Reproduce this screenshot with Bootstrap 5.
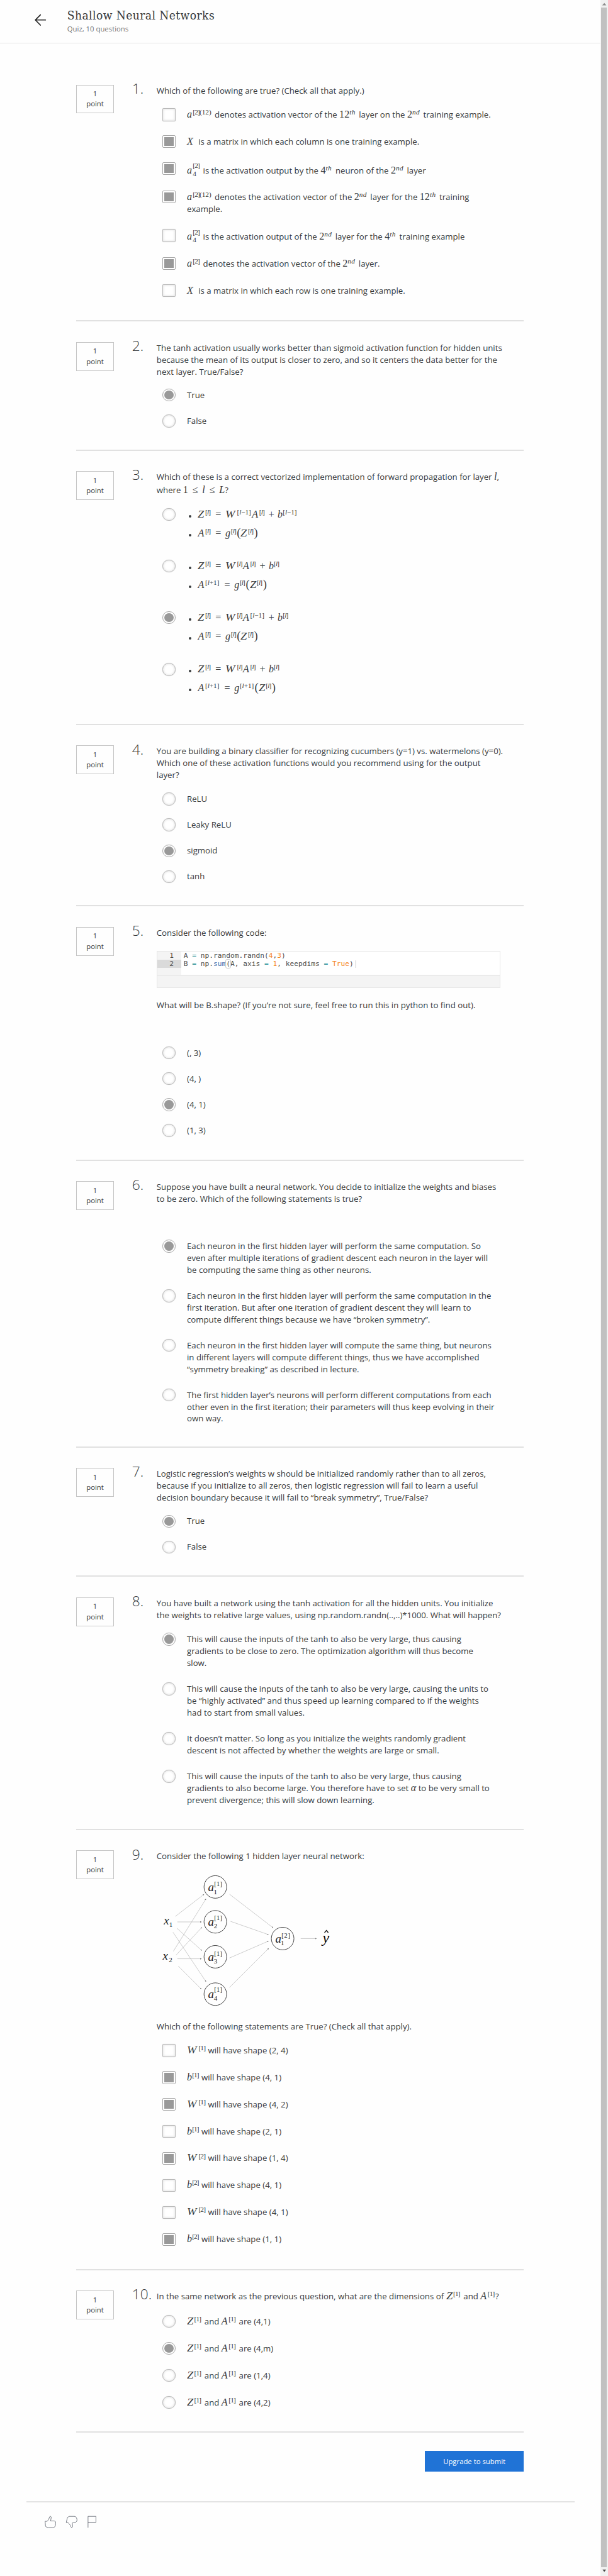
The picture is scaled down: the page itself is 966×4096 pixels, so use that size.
<!DOCTYPE html>
<html lang="en">
<head>
<meta charset="utf-8">
<title>Shallow Neural Networks</title>
<meta name="viewport" content="width=device-width, initial-scale=1">
<link rel="stylesheet" href="https://cdn.jsdelivr.net/npm/bootstrap@5.3.0/dist/css/bootstrap.min.css">
<style>
html{font-size:9.4536px}
body{font-family:"Open Sans",sans-serif;font-size:1.4rem;line-height:2rem;color:#373a3c;background:#fefefe;height:4096px;overflow:hidden}
main{width:100.9rem}
.topbar{height:7.25rem;border-bottom:1px solid #e3e3e3;padding-left:5.75rem}
.back{width:2.1rem;height:2.1rem;margin-top:2.35rem;flex:none}
.topbar h1{font-family:"DejaVu Serif Condensed","DejaVu Serif",serif;font-stretch:condensed;font-size:2.02rem;letter-spacing:.045rem;line-height:2.6rem;margin:1.37rem 0 0;white-space:nowrap}
.titles{margin-left:3.45rem}
.subt{font-size:1.2rem;line-height:1.6rem;color:#757575;margin-top:.08rem}
.question{margin-left:12.8rem;width:75.2rem;border-bottom:2px solid #e1e1e1;padding-top:3.42rem;align-items:flex-start}
.points{width:6.35rem;height:4.85rem;border:1px solid #c4c4c4;font-size:1.2rem;line-height:1.7rem;padding-top:.6rem;flex:none;text-align:center}
.num{width:7.17rem;padding-left:3.05rem;font-size:2.4rem;font-weight:300;line-height:3rem;margin-top:-.82rem;flex:none;white-space:nowrap}
.qbody{width:59rem;margin-top:0;flex:none}
.prompt p{margin:0}
.prompt .after-code{margin-top:1.85rem}
.prompt .after-net{margin-top:1.8rem}
.opt{padding:0 0 2.35rem 5.1rem;min-height:0;margin:0;position:relative;width:58.3rem;white-space:nowrap}
.opt .form-check-input{position:absolute;left:1.02rem;top:-.06rem;margin:0;float:none;width:2.15rem;height:2.15rem;border:1px solid #b9b9b9;background:#fff;box-shadow:inset 0 0 .35rem .1rem #e6e6e6,0 0 1px #ccc;background-image:none!important;opacity:1}
.opt .form-check-input[type=checkbox]{border-radius:.2rem}
.opt .form-check-input:checked{border-color:#a5a5a5;background-color:#999;box-shadow:none;padding:2px;background-clip:content-box}
.opt.mo{padding-bottom:2.54rem}
#q1{height:46.85rem;padding-top:6.98rem}#q1 .prompt{height:4.06rem}
#q2{height:21.72rem}#q2 .prompt{height:7.93rem}
#q3{height:46.16rem}#q3 .prompt{height:6.3rem}
#q4{height:30.5rem}#q4 .prompt{height:7.98rem}
#q5{height:42.77rem}#q5 .prompt{height:20.18rem}
#q6{height:48.22rem}#q6 .prompt{height:9.92rem}
#q7{height:21.77rem}#q7 .prompt{height:7.96rem}
#q8{height:42.58rem}#q8 .prompt{height:6.06rem}
#q9{height:74rem}#q9 .prompt{height:32.64rem}
#q10{height:27.33rem}#q10 .prompt{height:4.2rem}
#q1 .o1,#q1 .o2,#q1 .o6{padding-bottom:2.53rem}
#q1 .o3{padding-bottom:2.78rem}#q1 .o4{padding-bottom:2.49rem}#q1 .o5{padding-bottom:2.72rem}
.low1{position:relative;top:.08rem}.low2{position:relative;top:.36rem}.low3{position:relative;top:.25rem}
/* formulas */
.tx{font-family:"Liberation Serif",serif;font-size:1.7rem;line-height:1;display:inline-block;white-space:nowrap;vertical-align:baseline}
.tx i{display:inline-block}
.tx sup,.tx sub{font-size:1.2rem;line-height:0;top:auto;bottom:auto;position:static;vertical-align:.52rem}
.tx sup{letter-spacing:-.09rem;margin-right:.15rem}
.tx sup.wide{letter-spacing:-.01rem}
.tx sup .nb{letter-spacing:0}
.tx sup.ord{letter-spacing:.04rem}
.tx sup.hi{vertical-align:.92rem}
.tx sub{vertical-align:-.4rem;display:inline-block;width:0;line-height:0}
.tx .Z{width:1.22rem;transform:scaleX(1.15);transform-origin:0 0}.tx .W{width:1.95rem;transform:scaleX(1.15);transform-origin:0 0}.tx .A{width:1.22rem}.tx .b{width:.86rem}.tx .g{width:.92rem}.tx .a{width:.98rem}
.tx .r{display:inline-block;text-align:center;width:2.38rem}
.tx .pl{display:inline-block;text-align:center;width:2.1rem}
.tx .pr{font-size:1.95rem;line-height:0}
.w43{width:4.3rem}.w29{width:2.93rem}.w23{width:2.34rem}.w21{width:2.12rem}.wX{width:1.56rem}.wW{width:3.18rem}.wb{width:2.07rem}.wZ{width:2.58rem}
#q3 .opt{height:8.68rem;padding-bottom:0}
.formulas{list-style:none;margin:0;padding:.05rem 0 0}
.formulas li{height:3.17rem;padding-left:1.85rem;position:relative}
.formulas li::before{content:"";position:absolute;left:.28rem;top:1.02rem;width:.48rem;height:.48rem;border-radius:50%;background:#373a3c}
.editor{margin-top:2rem;width:57.8rem;height:6.3rem;border:.2rem solid #e6e6e6;background:#f4f4f4;font-family:"DejaVu Sans Mono",monospace;font-size:1.186rem;line-height:1.4rem;color:#4d4d4c}
.lines{background:linear-gradient(90deg,#f4f4f4 4.05rem,#fff 4.05rem);height:4.05rem;border-bottom:1px solid #dedede}
.lines>div{height:1.4rem;white-space:pre}
.ln{display:inline-block;width:4.05rem;padding-right:1.28rem;text-align:right;margin-right:.4rem}
.cur .ln{background:#dadada}
.k{color:#3e999f}.n{color:#f5871f}.f{color:#4271ae}
.par{outline:1px solid #ccc;border-radius:2px}
.caret{display:inline-block;width:2px;height:1.2rem;background:#e8e8e8;vertical-align:middle;margin-left:2px}
.net{display:block;width:31.73rem;height:24rem;margin-top:.8rem;font-family:"Liberation Serif",serif;font-style:italic;fill:#222}
.net .up{font-style:normal}
.submit{width:16.65rem;height:3.5rem;border-radius:0;background:#2073d6;color:#fff;font-size:1.2rem;line-height:3.5rem;padding:0;margin:3.05rem 0 0 58.6rem;border:0;display:block}
.actions{margin-left:12.8rem}
.foot{margin:4.95rem 0 0 4.45rem;width:92.1rem;border-top:2px solid #e4e4e4}
.react{display:block;width:9.17rem;height:2.33rem;margin:2.15rem 0 0 2.9rem}
.bar{width:1.3rem;height:4096px;background:#f1f1f1;top:0;right:0}
.bar svg{display:block;width:1.2rem;height:1.2rem}
.thumb{background:#c1c1c1;width:1rem;margin:.1rem 0 0 .1rem;height:4070px}
</style>
<script src="https://cdn.jsdelivr.net/npm/bootstrap@5.3.0/dist/js/bootstrap.bundle.min.js"></script>
</head>
<body class="position-relative">
<main>
<header class="topbar d-flex">
<svg class="back" viewBox="80 72 64 64" fill="none" stroke="#222" stroke-width="5.5" stroke-linecap="round" stroke-linejoin="round"><path d="M113 77L87 103.500L113 130M88 103.500H139"/></svg>
<div class="titles"><h1>Shallow Neural Networks</h1><div class="subt">Quiz, 10 questions</div></div>
</header>

<section class="question d-flex" id="q1"><div class="points">1<br>point</div><div class="num">1.</div><div class="qbody">
<div class="prompt"><p>Which of the following are true? (Check all that apply.)</p></div>
<div class="form-check opt o1"><input class="form-check-input" type="checkbox"><span class="tx w43"><i class="a">a</i><sup>[2]<span class="nb">(12)</span></sup></span> denotes activation vector of the <span class="tx w29">12<sup class="ord"><i>th</i></sup></span> layer on the <span class="tx w23">2<sup class="ord"><i>nd</i></sup></span> training example.</div>
<div class="form-check opt o2"><input class="form-check-input" type="checkbox" checked><span class="low1"><span class="tx wX"><i>X</i></span> is a matrix in which each column is one training example.</span></div>
<div class="form-check opt o3"><input class="form-check-input" type="checkbox" checked><span class="low2"><span class="tx w23"><i class="a">a</i><sub>4</sub><sup class="hi">[2]</sup></span> is the activation output by the <span class="tx w21">4<sup class="ord"><i>th</i></sup></span> neuron of the <span class="tx w23">2<sup class="ord"><i>nd</i></sup></span> layer</span></div>
<div class="form-check opt o4"><input class="form-check-input" type="checkbox" checked><span class="tx w43"><i class="a">a</i><sup>[2]<span class="nb">(12)</span></sup></span> denotes the activation vector of the <span class="tx w23">2<sup class="ord"><i>nd</i></sup></span> layer for the <span class="tx w29">12<sup class="ord"><i>th</i></sup></span> training<br>example.</div>
<div class="form-check opt o5"><input class="form-check-input" type="checkbox"><span class="low3"><span class="tx w23"><i class="a">a</i><sub>4</sub><sup class="hi">[2]</sup></span> is the activation output of the <span class="tx w23">2<sup class="ord"><i>nd</i></sup></span> layer for the <span class="tx w21">4<sup class="ord"><i>th</i></sup></span> training example</span></div>
<div class="form-check opt o6"><input class="form-check-input" type="checkbox" checked><span class="tx w23"><i class="a">a</i><sup>[2]</sup></span> denotes the activation vector of the <span class="tx w23">2<sup class="ord"><i>nd</i></sup></span> layer.</div>
<div class="form-check opt"><input class="form-check-input" type="checkbox"><span class="low1"><span class="tx wX"><i>X</i></span> is a matrix in which each row is one training example.</span></div>
</div></section>

<section class="question d-flex" id="q2"><div class="points">1<br>point</div><div class="num">2.</div><div class="qbody">
<div class="prompt"><p>The tanh activation usually works better than sigmoid activation function for hidden units<br>because the mean of its output is closer to zero, and so it centers the data better for the<br>next layer. True/False?</p></div>
<div class="form-check opt"><input class="form-check-input" type="radio" name="q2" checked>True</div>
<div class="form-check opt"><input class="form-check-input" type="radio" name="q2">False</div>
</div></section>

<section class="question d-flex" id="q3"><div class="points">1<br>point</div><div class="num">3.</div><div class="qbody">
<div class="prompt"><p>Which of these is a correct vectorized implementation of forward propagation for layer <span class="tx"><i>l</i></span>,<br><span class="low3">where <span class="tx">1<span class="r">≤</span><i>l</i><span class="r">≤</span><i>L</i></span>?</span></p></div>
<div class="form-check opt"><input class="form-check-input" type="radio" name="q3"><ul class="formulas">
<li><span class="tx"><i class="Z">Z</i><sup>[<i>l</i>]</sup><span class="r">=</span><i class="W">W</i><sup class="wide">[<i>l</i>−1]</sup><i class="A">A</i><sup>[<i>l</i>]</sup><span class="pl">+</span><i class="b">b</i><sup class="wide">[<i>l</i>−1]</sup></span></li>
<li><span class="tx"><i class="A">A</i><sup>[<i>l</i>]</sup><span class="r">=</span><i class="g">g</i><sup>[<i>l</i>]</sup><span class="pr">(</span><i class="Z">Z</i><sup>[<i>l</i>]</sup><span class="pr">)</span></span></li></ul></div>
<div class="form-check opt"><input class="form-check-input" type="radio" name="q3"><ul class="formulas">
<li><span class="tx"><i class="Z">Z</i><sup>[<i>l</i>]</sup><span class="r">=</span><i class="W">W</i><sup>[<i>l</i>]</sup><i class="A">A</i><sup>[<i>l</i>]</sup><span class="pl">+</span><i class="b">b</i><sup>[<i>l</i>]</sup></span></li>
<li><span class="tx"><i class="A">A</i><sup class="wide">[<i>l</i>+1]</sup><span class="r">=</span><i class="g">g</i><sup>[<i>l</i>]</sup><span class="pr">(</span><i class="Z">Z</i><sup>[<i>l</i>]</sup><span class="pr">)</span></span></li></ul></div>
<div class="form-check opt"><input class="form-check-input" type="radio" name="q3" checked><ul class="formulas">
<li><span class="tx"><i class="Z">Z</i><sup>[<i>l</i>]</sup><span class="r">=</span><i class="W">W</i><sup>[<i>l</i>]</sup><i class="A">A</i><sup class="wide">[<i>l</i>−1]</sup><span class="pl">+</span><i class="b">b</i><sup>[<i>l</i>]</sup></span></li>
<li><span class="tx"><i class="A">A</i><sup>[<i>l</i>]</sup><span class="r">=</span><i class="g">g</i><sup>[<i>l</i>]</sup><span class="pr">(</span><i class="Z">Z</i><sup>[<i>l</i>]</sup><span class="pr">)</span></span></li></ul></div>
<div class="form-check opt"><input class="form-check-input" type="radio" name="q3"><ul class="formulas">
<li><span class="tx"><i class="Z">Z</i><sup>[<i>l</i>]</sup><span class="r">=</span><i class="W">W</i><sup>[<i>l</i>]</sup><i class="A">A</i><sup>[<i>l</i>]</sup><span class="pl">+</span><i class="b">b</i><sup>[<i>l</i>]</sup></span></li>
<li><span class="tx"><i class="A">A</i><sup class="wide">[<i>l</i>+1]</sup><span class="r">=</span><i class="g">g</i><sup class="wide">[<i>l</i>+1]</sup><span class="pr">(</span><i class="Z">Z</i><sup>[<i>l</i>]</sup><span class="pr">)</span></span></li></ul></div>
</div></section>

<section class="question d-flex" id="q4"><div class="points">1<br>point</div><div class="num">4.</div><div class="qbody">
<div class="prompt"><p>You are building a binary classifier for recognizing cucumbers (y=1) vs. watermelons (y=0).<br>Which one of these activation functions would you recommend using for the output<br>layer?</p></div>
<div class="form-check opt"><input class="form-check-input" type="radio" name="q4">ReLU</div>
<div class="form-check opt"><input class="form-check-input" type="radio" name="q4">Leaky ReLU</div>
<div class="form-check opt"><input class="form-check-input" type="radio" name="q4" checked>sigmoid</div>
<div class="form-check opt"><input class="form-check-input" type="radio" name="q4">tanh</div>
</div></section>

<section class="question d-flex" id="q5"><div class="points">1<br>point</div><div class="num">5.</div><div class="qbody">
<div class="prompt"><p>Consider the following code:</p>
<div class="editor"><div class="lines"><div><span class="ln">1</span>A <span class="k">=</span> np.random.randn(<span class="n">4</span>,<span class="n">3</span>)</div><div class="cur"><span class="ln">2</span>B <span class="k">=</span> np.<span class="f">sum</span><span class="par">(</span>A, axis <span class="k">=</span> <span class="n">1</span>, keepdims <span class="k">=</span> <span class="n">True</span>)<span class="caret"></span></div></div></div>
<p class="after-code">What will be B.shape? (If you’re not sure, feel free to run this in python to find out).</p></div>
<div class="form-check opt"><input class="form-check-input" type="radio" name="q5">(, 3)</div>
<div class="form-check opt"><input class="form-check-input" type="radio" name="q5">(4, )</div>
<div class="form-check opt"><input class="form-check-input" type="radio" name="q5" checked>(4, 1)</div>
<div class="form-check opt"><input class="form-check-input" type="radio" name="q5">(1, 3)</div>
</div></section>

<section class="question d-flex" id="q6"><div class="points">1<br>point</div><div class="num">6.</div><div class="qbody">
<div class="prompt"><p>Suppose you have built a neural network. You decide to initialize the weights and biases<br>to be zero. Which of the following statements is true?</p></div>
<div class="form-check opt"><input class="form-check-input" type="radio" name="q6" checked>Each neuron in the first hidden layer will perform the same computation. So<br>even after multiple iterations of gradient descent each neuron in the layer will<br>be computing the same thing as other neurons.</div>
<div class="form-check opt"><input class="form-check-input" type="radio" name="q6">Each neuron in the first hidden layer will perform the same computation in the<br>first iteration. But after one iteration of gradient descent they will learn to<br>compute different things because we have “broken symmetry”.</div>
<div class="form-check opt"><input class="form-check-input" type="radio" name="q6">Each neuron in the first hidden layer will compute the same thing, but neurons<br>in different layers will compute different things, thus we have accomplished<br>“symmetry breaking” as described in lecture.</div>
<div class="form-check opt"><input class="form-check-input" type="radio" name="q6">The first hidden layer’s neurons will perform different computations from each<br>other even in the first iteration; their parameters will thus keep evolving in their<br>own way.</div>
</div></section>

<section class="question d-flex" id="q7"><div class="points">1<br>point</div><div class="num">7.</div><div class="qbody">
<div class="prompt"><p>Logistic regression’s weights w should be initialized randomly rather than to all zeros,<br>because if you initialize to all zeros, then logistic regression will fail to learn a useful<br>decision boundary because it will fail to “break symmetry”, True/False?</p></div>
<div class="form-check opt"><input class="form-check-input" type="radio" name="q7" checked>True</div>
<div class="form-check opt"><input class="form-check-input" type="radio" name="q7">False</div>
</div></section>

<section class="question d-flex" id="q8"><div class="points">1<br>point</div><div class="num">8.</div><div class="qbody">
<div class="prompt"><p>You have built a network using the tanh activation for all the hidden units. You initialize<br>the weights to relative large values, using np.random.randn(..,..)*1000. What will happen?</p></div>
<div class="form-check opt"><input class="form-check-input" type="radio" name="q8" checked>This will cause the inputs of the tanh to also be very large, thus causing<br>gradients to be close to zero. The optimization algorithm will thus become<br>slow.</div>
<div class="form-check opt"><input class="form-check-input" type="radio" name="q8">This will cause the inputs of the tanh to also be very large, causing the units to<br>be “highly activated” and thus speed up learning compared to if the weights<br>had to start from small values.</div>
<div class="form-check opt"><input class="form-check-input" type="radio" name="q8">It doesn’t matter. So long as you initialize the weights randomly gradient<br>descent is not affected by whether the weights are large or small.</div>
<div class="form-check opt"><input class="form-check-input" type="radio" name="q8">This will cause the inputs of the tanh to also be very large, thus causing<br>gradients to also become large. You therefore have to set <span class="tx"><i>α</i></span> to be very small to<br><span class="low1">prevent divergence; this will slow down learning.</span></div>
</div></section>

<section class="question d-flex" id="q9"><div class="points">1<br>point</div><div class="num">9.</div><div class="qbody">
<div class="prompt"><p>Consider the following 1 hidden layer neural network:</p>
<svg class="net" viewBox="68 0 952 720">
<defs><marker id="tip" markerWidth="8" markerHeight="8" refX="6" refY="3.500" orient="auto" markerUnits="userSpaceOnUse"><path d="M0 0L8 3.500L0 7Z" fill="#777"/></marker></defs>
<g stroke="#b9b9b9" stroke-width="2.300" fill="none">
<path d="M162 248L306 137" marker-end="url(#tip)"/><path d="M172 276H293" marker-end="url(#tip)"/><path d="M170 308L295 420" marker-end="url(#tip)"/><path d="M150 328L316 577" marker-end="url(#tip)"/>
<path d="M152 424L316 160" marker-end="url(#tip)"/><path d="M165 444L295 304" marker-end="url(#tip)"/><path d="M172 462H293" marker-end="url(#tip)"/><path d="M177 499L292 614" marker-end="url(#tip)"/>
<path d="M435 136L654 305" marker-end="url(#tip)"/><path d="M440 273L631 340" marker-end="url(#tip)"/><path d="M435 458L631 373" marker-end="url(#tip)"/><path d="M435 607L632 410" marker-end="url(#tip)"/><path d="M794 360H873" marker-end="url(#tip)"/></g>
<g fill="none" stroke="#3a3a3a" stroke-width="3"><circle cx="363.500" cy="99.500" r="57"/><circle cx="363.500" cy="275.500" r="57"/><circle cx="363.500" cy="452" r="57"/><circle cx="363.500" cy="640.500" r="57"/><circle cx="703" cy="360" r="57"/></g>
<g font-size="60"><text x="327" y="121">a</text><text x="327" y="296">a</text><text x="327" y="473">a</text><text x="327" y="660">a</text><text x="666" y="381">a</text><text x="104" y="290">x</text><text x="98" y="466">x</text></g>
<g font-size="35" class="up"><text x="355" y="136">1</text><text x="356" y="307">2</text><text x="356" y="486">3</text><text x="356" y="672">4</text><text x="693" y="395">1</text><text x="131" y="303">1</text><text x="129" y="479">2</text>
<g font-size="33"><text x="358" y="94" textLength="40">[1]</text><text x="358" y="267" textLength="40">[1]</text><text x="358" y="449" textLength="40">[1]</text><text x="358" y="630" textLength="40">[1]</text><text x="697" y="354" textLength="44">[2]</text></g></g>
<text x="904" y="382" font-size="76" fill="#000">y</text><path d="M914 330L924 319L933 330" fill="none" stroke="#111" stroke-width="4.500"/>
</svg>
<p class="after-net">Which of the following statements are True? (Check all that apply).</p></div>
<div class="form-check opt mo"><input class="form-check-input" type="checkbox"><span class="tx wW"><i class="W">W</i><sup>[1]</sup></span> will have shape (2, 4)</div>
<div class="form-check opt mo"><input class="form-check-input" type="checkbox" checked><span class="tx wb"><i class="b">b</i><sup>[1]</sup></span> will have shape (4, 1)</div>
<div class="form-check opt mo"><input class="form-check-input" type="checkbox" checked><span class="tx wW"><i class="W">W</i><sup>[1]</sup></span> will have shape (4, 2)</div>
<div class="form-check opt mo"><input class="form-check-input" type="checkbox"><span class="tx wb"><i class="b">b</i><sup>[1]</sup></span> will have shape (2, 1)</div>
<div class="form-check opt mo"><input class="form-check-input" type="checkbox" checked><span class="tx wW"><i class="W">W</i><sup>[2]</sup></span> will have shape (1, 4)</div>
<div class="form-check opt mo"><input class="form-check-input" type="checkbox"><span class="tx wb"><i class="b">b</i><sup>[2]</sup></span> will have shape (4, 1)</div>
<div class="form-check opt mo"><input class="form-check-input" type="checkbox"><span class="tx wW"><i class="W">W</i><sup>[2]</sup></span> will have shape (4, 1)</div>
<div class="form-check opt mo"><input class="form-check-input" type="checkbox" checked><span class="tx wb"><i class="b">b</i><sup>[2]</sup></span> will have shape (1, 1)</div>
</div></section>

<section class="question d-flex" id="q10"><div class="points">1<br>point</div><div class="num">10.</div><div class="qbody">
<div class="prompt"><p class="text-nowrap">In the same network as the previous question, what are the dimensions of <span class="tx wZ"><i class="Z">Z</i><sup>[1]</sup></span> and <span class="tx"><i class="A">A</i><sup>[1]</sup></span>?</p></div>
<div class="form-check opt mo"><input class="form-check-input" type="radio" name="q10"><span class="low1"><span class="tx wZ"><i class="Z">Z</i><sup>[1]</sup></span> and <span class="tx wZ"><i class="A">A</i><sup>[1]</sup></span> are (4,1)</span></div>
<div class="form-check opt mo"><input class="form-check-input" type="radio" name="q10" checked><span class="low1"><span class="tx wZ"><i class="Z">Z</i><sup>[1]</sup></span> and <span class="tx wZ"><i class="A">A</i><sup>[1]</sup></span> are (4,m)</span></div>
<div class="form-check opt mo"><input class="form-check-input" type="radio" name="q10"><span class="low1"><span class="tx wZ"><i class="Z">Z</i><sup>[1]</sup></span> and <span class="tx wZ"><i class="A">A</i><sup>[1]</sup></span> are (1,4)</span></div>
<div class="form-check opt mo"><input class="form-check-input" type="radio" name="q10"><span class="low1"><span class="tx wZ"><i class="Z">Z</i><sup>[1]</sup></span> and <span class="tx wZ"><i class="A">A</i><sup>[1]</sup></span> are (4,2)</span></div>
</div></section>

<div class="actions d-flex"><button class="btn submit" type="button">Upgrade to submit</button></div>
<footer class="foot">
<svg class="react" viewBox="40 90 275 70" fill="none" stroke="#555b66" stroke-width="2.600" stroke-linejoin="round"><path d="M48 122H58C66 115 68 108 71 99C74 95 79 97 79 102C79 109 76 114 76 120H94C101 121 102 127 101 132C101 139 100 144 98 148C95 153 91 154 87 154H63C55 154 51 149 50 143Z"/><path d="M155 128L160 107C162 100 167 97 173 97H195C201 97 204 100 207 105C210 112 210 119 207 123C203 128 196 129 187 129C184 135 188 142 187 148C186 154 180 155 178 149C175 141 171 134 164 129Z"/><path d="M265 154V97H305V127H265"/></svg>
</footer>
</main>
<div class="bar position-absolute"><svg viewBox="0 0 12 12"><path d="M3 9L6.500 5L10 9Z" fill="#8a8a8a"/></svg><div class="thumb"></div><svg viewBox="0 0 12 12"><path d="M3.500 4L6.500 8L9.500 4Z" fill="#444"/></svg></div>
</body>
</html>
